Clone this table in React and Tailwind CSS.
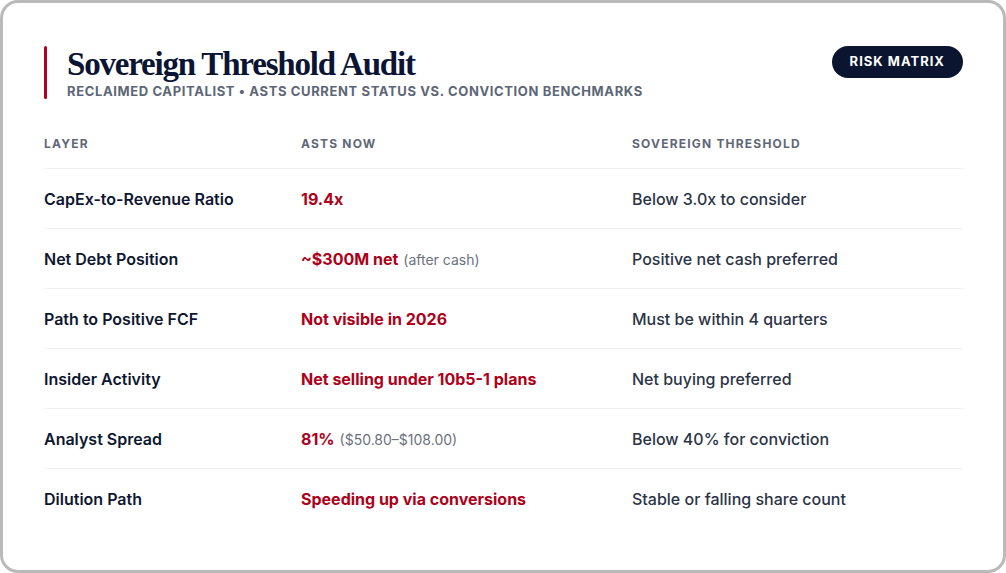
import React from "react";

const rows = [
  { layer: "CapEx-to-Revenue Ratio", now: "19.4x", note: null, threshold: "Below 3.0x to consider" },
  { layer: "Net Debt Position", now: "~$300M net", note: "(after cash)", threshold: "Positive net cash preferred" },
  { layer: "Path to Positive FCF", now: "Not visible in 2026", note: null, threshold: "Must be within 4 quarters" },
  { layer: "Insider Activity", now: "Net selling under 10b5-1 plans", note: null, threshold: "Net buying preferred" },
  { layer: "Analyst Spread", now: "81%", note: "($50.80–$108.00)", threshold: "Below 40% for conviction" },
  { layer: "Dilution Path", now: "Speeding up via conversions", note: null, threshold: "Stable or falling share count" },
];

export default function App() {
  return (
    <div className="w-[1006px] h-[573px] bg-white font-['Inter','Liberation_Sans',sans-serif]">
      <div className="w-full h-full border-[3px] border-[#bababa] rounded-[18px] bg-white pt-[43px] pl-[41px] pr-[40px]">
        {/* Header */}
        <div className="flex justify-between items-start">
          <div className="flex">
            <div className="w-[3px] bg-[#b0001e] rounded-full" />
            <div className="pl-[20px]">
              <h1 className="font-['Liberation_Serif',serif] font-bold text-[33px] leading-[36px] tracking-[-1.2px] text-[#0b1533]">
                Sovereign Threshold Audit
              </h1>
              <p className="mt-[1px] text-[13px] leading-[16px] font-bold uppercase tracking-[0.048em] text-[#5d6677]">
                Reclaimed Capitalist • ASTS Current Status vs. Conviction Benchmarks
              </p>
            </div>
          </div>
          <div className="h-[32px] px-[18px] rounded-full bg-[#0b1530] text-white text-[13px] font-bold tracking-[0.078em] flex items-center">
            RISK MATRIX
          </div>
        </div>

        {/* Table */}
        <div className="mt-[37px]">
          <div className="grid grid-cols-[257px_331px_1fr] pb-[16px] text-[12px] leading-[16px] font-bold tracking-[0.1em] text-[#5f6878]">
            <div>LAYER</div>
            <div>ASTS NOW</div>
            <div>SOVEREIGN THRESHOLD</div>
          </div>
          {rows.map((r) => (
            <div
              key={r.layer}
              className="grid grid-cols-[257px_331px_1fr] h-[60px] items-center border-t border-[#eef0f3] text-[16px]"
            >
              <div className="font-semibold text-[#0e1730]">{r.layer}</div>
              <div>
                <span className="font-bold text-[#ad0019]">{r.now}</span>
                {r.note && <span className="ml-[5px] text-[14px] text-[#6b7280]">{r.note}</span>}
              </div>
              <div className="font-medium text-[#2b3446]">{r.threshold}</div>
            </div>
          ))}
        </div>
      </div>
    </div>
  );
}
